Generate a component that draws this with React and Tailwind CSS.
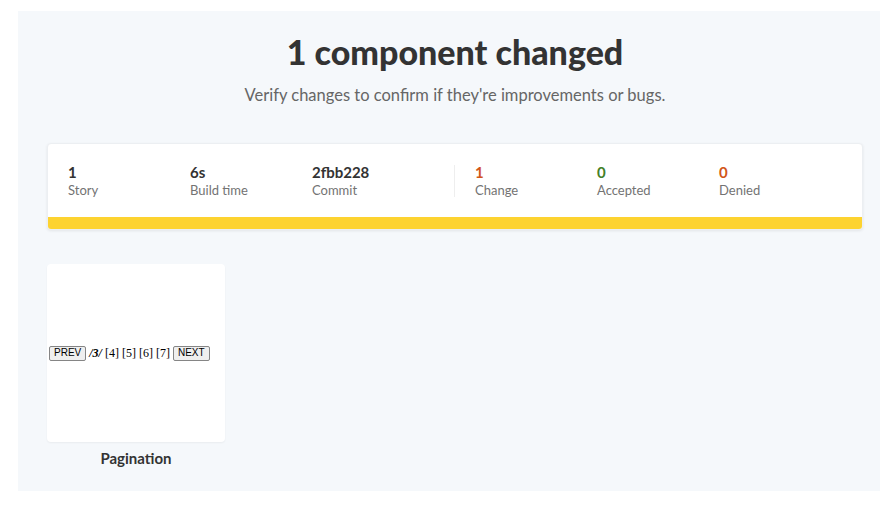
import React from 'react';

const stats = [
  { value: '1', label: 'Story', color: 'text-[#333333]' },
  { value: '6s', label: 'Build time', color: 'text-[#333333]' },
  { value: '2fbb228', label: 'Commit', color: 'text-[#333333]' },
];

const results = [
  { value: '1', label: 'Change', color: 'text-[#d25618]' },
  { value: '0', label: 'Accepted', color: 'text-[#448028]' },
  { value: '0', label: 'Denied', color: 'text-[#d25618]' },
];

const Stat = ({ value, label, color }) => (
  <div className="w-[122px] flex flex-col">
    <span className={`text-[15px] leading-[18px] font-bold ${color}`}>{value}</span>
    <span className="text-[13px] leading-[18px] text-[#737373]">{label}</span>
  </div>
);

const Btn = ({ children }) => (
  <span className="px-[4px] h-[15px] flex items-center border border-[#858585] bg-[#efefef] rounded-[2px] font-['Liberation_Sans',sans-serif] text-[10px] leading-[12px]">
    {children}
  </span>
);

const App = () => {
  return (
    <div className="w-[880px] h-[505px] overflow-hidden bg-white font-['Lato',sans-serif]">
      <div className="ml-[18px] mt-[11px] w-[874px] h-[480px] bg-[#f5f8fb] px-[29px] pt-[20px]">
        <h1 className="text-center text-[34px] leading-[42px] font-black text-[#333333]">1 component changed</h1>
        <p className="mt-[11px] text-center text-[16.5px] leading-[22px] text-[#666666]">
          Verify changes to confirm if they're improvements or bugs.
        </p>

        <div className="mt-[37px] bg-white rounded-[4px] shadow-[0_1px_3px_rgba(0,0,0,0.08)] border border-[#eceff2] overflow-hidden">
          <div className="flex items-center px-[20px] h-[73px]">
            {stats.map((s) => (
              <Stat key={s.label} {...s} />
            ))}
            <div className="w-px h-[32px] bg-[#eeeeee] ml-[20px] mr-[20px]" />
            {results.map((s) => (
              <Stat key={s.label} {...s} />
            ))}
          </div>
          <div className="h-[12px] bg-[#fdd330]" />
        </div>

        <div className="mt-[34px] w-[178px] flex flex-col items-center">
          <div className="w-[178px] h-[178px] bg-white rounded-[4px] shadow-[0_1px_2px_rgba(0,0,0,0.05)] flex items-center pl-[2px]">
            <div className="flex items-center gap-[3px] whitespace-nowrap font-['Liberation_Serif',serif] text-[12px] text-black">
              <Btn>PREV</Btn>
              <b><i>/3/</i></b>
              <span>[4]</span>
              <span>[5]</span>
              <span>[6]</span>
              <span>[7]</span>
              <Btn>NEXT</Btn>
            </div>
          </div>
          <div className="mt-[7px] text-[15px] leading-[18px] font-bold text-[#333333]">Pagination</div>
        </div>
      </div>
    </div>
  );
};

export default App;
